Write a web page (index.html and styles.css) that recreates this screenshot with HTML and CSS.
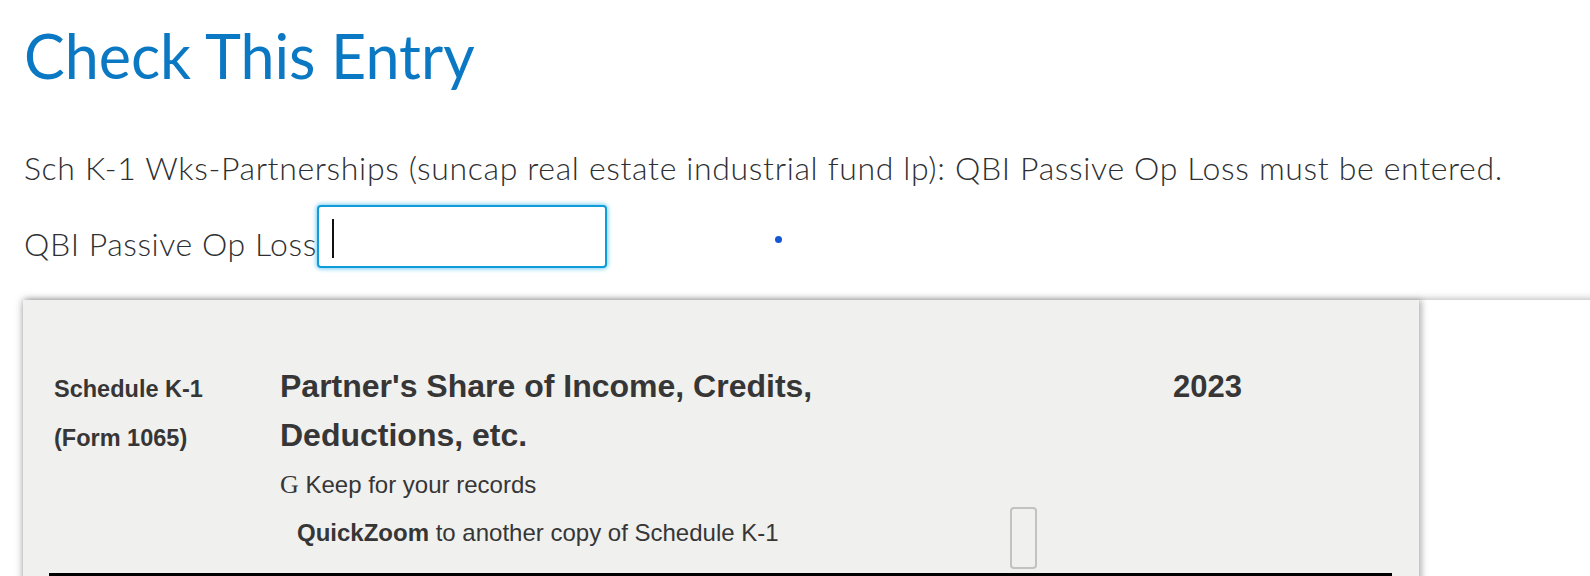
FILE: index.html
```html
<!DOCTYPE html>
<html lang="en">
<head>
<meta charset="utf-8">
<title>Check This Entry</title>
<link rel="stylesheet" href="styles.css">
</head>
<body>
<div class="page">
  <h1 class="title">Check This Entry</h1>
  <p class="message">Sch K-1 Wks-Partnerships (suncap real estate industrial fund lp): QBI Passive Op Loss must be entered.</p>
  <div class="field">
    <label class="field-label">QBI Passive Op Loss</label>
    <div class="input"><span class="caret"></span></div>
    <span class="dot"></span>
  </div>
</div>
<div class="viewer">
  <div class="panel">
    <div class="form-head">
      <div class="form-id">Schedule K-1</div>
      <div class="form-title">Partner's Share of Income, Credits,</div>
      <div class="form-year">2023</div>
      <div class="form-id">(Form 1065)</div>
      <div class="form-title">Deductions, etc.</div>
      <div></div>
    </div>
    <div class="note"><span class="arrow">G</span> Keep for your records</div>
    <div class="zoom-row">
      <div class="zoom-text"><b>QuickZoom</b> to another copy of Schedule K-1</div>
      <div class="zoom-box"></div>
    </div>
    <div class="rule"></div>
  </div>
</div>
</body>
</html>
```

FILE: styles.css
```css
html, body {
  margin: 0;
  padding: 0;
  background: #ffffff;
  overflow: hidden;
}

body {
  width: 1590px;
  height: 576px;
  font-family: Lato, "Open Sans", sans-serif;
}

.page {
  padding-left: 24px;
  padding-top: 19px;
}

.title {
  margin: 0;
  font-family: Lato, sans-serif;
  font-weight: 400;
  font-size: 61px;
  line-height: 74px;
  color: #0a78c2;
}

.message {
  margin: 55px 0 0 0;
  font-size: 32px;
  font-weight: 300;
  letter-spacing: 0.65px;
  line-height: normal;
  color: #2e2f32;
}

.field {
  display: flex;
  align-items: flex-end;
  margin-top: 18px;
  height: 63px;
}

.field-label {
  font-size: 32px;
  font-weight: 300;
  letter-spacing: 0.55px;
  line-height: normal;
  color: #2e2f32;
  margin-bottom: 5px;
}

.input {
  box-sizing: border-box;
  width: 290px;
  height: 63px;
  margin-left: 0;
  border: 2px solid #109cd8;
  border-radius: 4px;
  background: #fff;
  box-shadow: 0 0 4px 1px rgba(30, 175, 235, 0.6);
  padding: 12px 0 0 13px;
}

.caret {
  display: block;
  width: 2px;
  height: 39px;
  background: #111;
}

.dot {
  width: 7px;
  height: 7px;
  border-radius: 50%;
  background: #1556d4;
  margin-left: 168px;
  margin-bottom: 25px;
}

.viewer {
  margin-top: 32px;
  margin-left: 23px;
  width: 1700px;
  height: 400px;
  background: #fff;
  box-shadow: 0 0 8px rgba(0, 0, 0, 0.35);
}

.panel {
  width: 1396px;
  height: 400px;
  box-sizing: border-box;
  background: #f0f0ef;
  box-shadow: 3px 0 6px rgba(0, 0, 0, 0.28);
  padding: 63px 27px 0 26px;
  font-family: "Liberation Sans", Arial, sans-serif;
  color: #363636;
}

.form-head {
  display: grid;
  grid-template-columns: 226px 893px auto;
  align-items: baseline;
  padding-left: 5px;
}

.form-id {
  font-weight: 700;
  font-size: 23.5px;
  line-height: 46px;
}

.form-title {
  font-weight: 700;
  font-size: 32px;
  line-height: 46px;
}

.form-year {
  font-weight: 700;
  font-size: 31px;
  line-height: 46px;
}

.note {
  margin-left: 231px;
  margin-top: 0;
  font-size: 24px;
  line-height: 48px;
}

.arrow {
  font-family: "Liberation Serif", "Times New Roman", serif;
  font-size: 26px;
}

.zoom-row {
  display: flex;
  align-items: flex-start;
  margin-left: 248px;
}

.zoom-text {
  font-size: 24px;
  line-height: 48px;
}

.zoom-text b {
  font-weight: 700;
}

.zoom-box {
  box-sizing: border-box;
  width: 27px;
  height: 62px;
  margin-left: 231px;
  margin-top: -2px;
  border: 2px solid #c2c2c2;
  border-radius: 4px;
}

.rule {
  height: 3px;
  background: #000;
  margin-top: 4px;
}
```
